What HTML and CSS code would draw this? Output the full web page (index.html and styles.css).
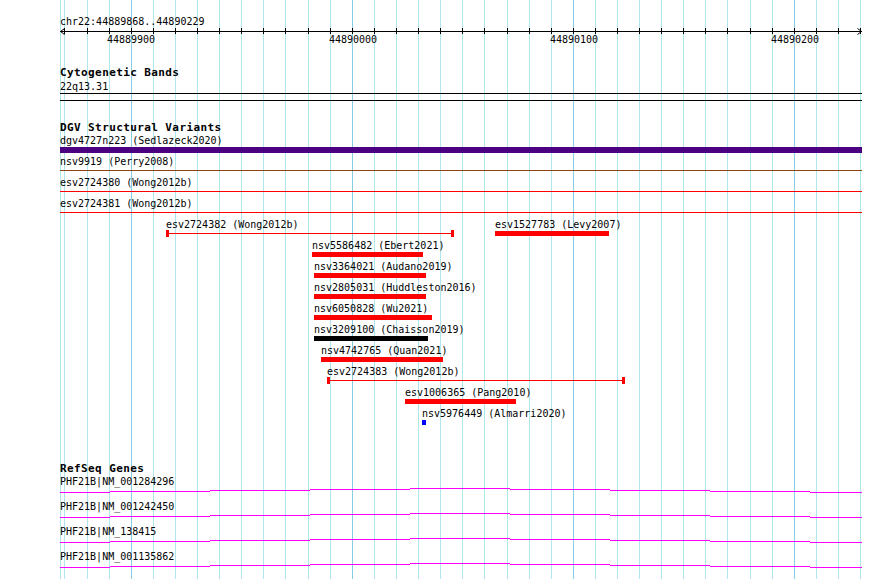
FILE: index.html
```html
<!DOCTYPE html>
<html lang="en">
<head>
    <meta charset="UTF-8">
    <meta name="viewport" content="width=device-width, initial-scale=1.0">
    <title>chr22:44889868..44890229</title>
    <link rel="stylesheet" href="styles.css">
</head>
<body>

<div class="view">
    <!-- 10 bp grid, darker every 100 bp -->
    <svg class="grid" width="890" height="579">
        <path class="minor" d="M60.5 0V579M64.5 0V579M87.5 0V579M109.5 0V579M153.5 0V579M175.5 0V579M197.5 0V579M219.5 0V579M241.5 0V579M263.5 0V579M285.5 0V579M308.5 0V579M330.5 0V579M374.5 0V579M396.5 0V579M418.5 0V579M440.5 0V579M462.5 0V579M484.5 0V579M507.5 0V579M529.5 0V579M551.5 0V579M595.5 0V579M617.5 0V579M639.5 0V579M661.5 0V579M683.5 0V579M705.5 0V579M727.5 0V579M750.5 0V579M772.5 0V579M816.5 0V579M838.5 0V579M860.5 0V579"/>
        <path class="major" d="M131.5 0V579M352.5 0V579M573.5 0V579M794.5 0V579"/>
    </svg>

    <div class="ruler">
        <svg class="scale" width="890" height="47">
            <path d="M60 31.5H862M64.5 28.5L60.5 31.5L64.5 34.5M857.5 28.5L861.5 31.5L857.5 34.5"/>
            <path d="M64.5 28v6M87.5 28v6M109.5 28v6M131.5 28v6M153.5 28v6M175.5 28v6M197.5 28v6M219.5 28v6M241.5 28v6M263.5 28v6M285.5 28v6M308.5 28v6M330.5 28v6M352.5 28v6M374.5 28v6M396.5 28v6M418.5 28v6M440.5 28v6M462.5 28v6M484.5 28v6M507.5 28v6M529.5 28v6M551.5 28v6M573.5 28v6M595.5 28v6M617.5 28v6M639.5 28v6M661.5 28v6M683.5 28v6M705.5 28v6M727.5 28v6M750.5 28v6M772.5 28v6M794.5 28v6M816.5 28v6M838.5 28v6M860.5 28v6"/>
        </svg>
        <div class="locus">chr22:44889868..44890229</div>
        <span class="tick-label" style="left:131px">44889900</span>
        <span class="tick-label" style="left:353px">44890000</span>
        <span class="tick-label" style="left:574px">44890100</span>
        <span class="tick-label" style="left:795px">44890200</span>
    </div>

    <div class="track cyto">
        <div class="track-title">Cytogenetic Bands</div>
        <div class="band-name">22q13.31</div>
        <div class="band"></div>
    </div>

    <div class="track dgv">
        <div class="track-title">DGV Structural Variants</div>
        <div class="rows">
            <div class="row">
                <div class="feat" style="left:60px;width:802px">
                    <div class="name">dgv4727n223 (Sedlazeck2020)</div>
                    <div class="bar thick indigo"></div>
                </div>
            </div>
            <div class="row">
                <div class="feat" style="left:60px;width:802px">
                    <div class="name">nsv9919 (Perry2008)</div>
                    <div class="link brown"></div>
                </div>
            </div>
            <div class="row">
                <div class="feat" style="left:60px;width:802px">
                    <div class="name">esv2724380 (Wong2012b)</div>
                    <div class="link red"></div>
                </div>
            </div>
            <div class="row">
                <div class="feat" style="left:60px;width:802px">
                    <div class="name">esv2724381 (Wong2012b)</div>
                    <div class="link red"></div>
                </div>
            </div>
            <div class="row">
                <div class="feat" style="left:166px;width:288px">
                    <div class="name">esv2724382 (Wong2012b)</div>
                    <div class="span red"></div>
                </div>
                <div class="feat" style="left:495px;width:114px">
                    <div class="name">esv1527783 (Levy2007)</div>
                    <div class="bar red"></div>
                </div>
            </div>
            <div class="row">
                <div class="feat" style="left:312px;width:111px">
                    <div class="name">nsv5586482 (Ebert2021)</div>
                    <div class="bar red"></div>
                </div>
            </div>
            <div class="row">
                <div class="feat" style="left:314px;width:112px">
                    <div class="name">nsv3364021 (Audano2019)</div>
                    <div class="bar red"></div>
                </div>
            </div>
            <div class="row">
                <div class="feat" style="left:314px;width:112px">
                    <div class="name">nsv2805031 (Huddleston2016)</div>
                    <div class="bar red"></div>
                </div>
            </div>
            <div class="row">
                <div class="feat" style="left:314px;width:118px">
                    <div class="name">nsv6050828 (Wu2021)</div>
                    <div class="bar red"></div>
                </div>
            </div>
            <div class="row">
                <div class="feat" style="left:314px;width:114px">
                    <div class="name">nsv3209100 (Chaisson2019)</div>
                    <div class="bar black"></div>
                </div>
            </div>
            <div class="row">
                <div class="feat" style="left:321px;width:122px">
                    <div class="name">nsv4742765 (Quan2021)</div>
                    <div class="bar red"></div>
                </div>
            </div>
            <div class="row">
                <div class="feat" style="left:327px;width:298px">
                    <div class="name">esv2724383 (Wong2012b)</div>
                    <div class="span red"></div>
                </div>
            </div>
            <div class="row">
                <div class="feat" style="left:405px;width:111px">
                    <div class="name">esv1006365 (Pang2010)</div>
                    <div class="bar red"></div>
                </div>
            </div>
            <div class="row">
                <div class="feat" style="left:422px;width:4px">
                    <div class="name">nsv5976449 (Almarri2020)</div>
                    <div class="bar blue"></div>
                </div>
            </div>
        </div>
    </div>

    <div class="track refseq">
        <div class="track-title">RefSeq Genes</div>
        <div class="rows">
            <div class="gene">
                <div class="name">PHF21B|NM_001284296</div>
                <svg class="model" width="890" height="25"><path d="M60 16.5H110M110 15.5H210M210 14.5H310M310 13.5H410M410 12.5H510M510 13.5H610M610 14.5H710M710 15.5H810M810 16.5H862"/></svg>
            </div>
            <div class="gene">
                <div class="name">PHF21B|NM_001242450</div>
                <svg class="model" width="890" height="25"><path d="M60 16.5H110M110 15.5H210M210 14.5H310M310 13.5H410M410 12.5H510M510 13.5H610M610 14.5H710M710 15.5H810M810 16.5H862"/></svg>
            </div>
            <div class="gene">
                <div class="name">PHF21B|NM_138415</div>
                <svg class="model" width="890" height="25"><path d="M60 16.5H110M110 15.5H210M210 14.5H310M310 13.5H410M410 12.5H510M510 13.5H610M610 14.5H710M710 15.5H810M810 16.5H862"/></svg>
            </div>
            <div class="gene">
                <div class="name">PHF21B|NM_001135862</div>
                <svg class="model" width="890" height="25"><path d="M60 16.5H110M110 15.5H210M210 14.5H310M310 13.5H410M410 12.5H510M510 13.5H610M610 14.5H710M710 15.5H810M810 16.5H862"/></svg>
            </div>
        </div>
    </div>
</div>

</body>
</html>
```

FILE: styles.css
```css
body {
    margin: 0;
    background-color: #fff;
    font-family: "DejaVu Sans Mono", "Liberation Mono", monospace;
    font-size: 10px;
    color: #000;
}
.view {
    position: relative;
    z-index: 0;
    width: 890px;
    height: 579px;
    overflow: hidden;
}
.grid {
    position: absolute;
    top: 0;
    left: 0;
    z-index: -1;
}
.grid path {
    fill: none;
    stroke-width: 1;
}
.grid .minor {
    stroke: #aee6ec;
}
.grid .major {
    stroke: #88cce8;
}

/* ruler */
.ruler {
    position: relative;
    height: 47px;
}
.scale {
    position: absolute;
    top: 0;
    left: 0;
}
.scale path {
    fill: none;
    stroke: #000;
    stroke-width: 1;
}
.locus {
    padding: 16px 0 0 60px;
    line-height: 11px;
}
.tick-label {
    position: absolute;
    top: 34px;
    line-height: 11px;
    transform: translateX(-50%);
}

/* tracks */
.track-title {
    padding-left: 60px;
    font-size: 11px;
    font-weight: bold;
    letter-spacing: 0.4px;
    line-height: 12px;
}
.cyto {
    margin-top: 20px;
}
.band-name {
    margin-top: 2px;
    padding-left: 60px;
    line-height: 11px;
}
.band {
    margin: 1px 0 0 60px;
    width: 802px;
    height: 6px;
    border-top: 1px solid #000;
    border-bottom: 1px solid #000;
}
.dgv {
    margin-top: 21px;
}
.refseq {
    margin-top: 34px;
}
.rows {
    margin-top: 1px;
}
.row {
    position: relative;
    height: 21px;
}
.feat {
    position: absolute;
    top: 0;
}
.name {
    height: 11px;
    line-height: 11px;
    white-space: nowrap;
}
.bar {
    margin-top: 1px;
    height: 5px;
    background-color: currentColor;
}
.bar.thick {
    height: 6px;
}
.link {
    margin-top: 3px;
    height: 1px;
    background-color: currentColor;
}
.span {
    position: relative;
    box-sizing: border-box;
    height: 7px;
    border-left: 3px solid currentColor;
    border-right: 3px solid currentColor;
}
.span::before {
    content: "";
    position: absolute;
    left: 0;
    right: 0;
    top: 3px;
    height: 1px;
    background-color: currentColor;
}
.red {
    color: #ff0000;
}
.black {
    color: #000;
}
.blue {
    color: #0000ff;
}
.indigo {
    color: #4b0082;
}
.brown {
    color: #8b4513;
}

.gene {
    position: relative;
    height: 25px;
}
.gene .name {
    padding-left: 60px;
}
.model {
    position: absolute;
    top: 0;
    left: 0;
}
.model path {
    fill: none;
    stroke: #ff00ff;
    stroke-width: 1;
}
```
